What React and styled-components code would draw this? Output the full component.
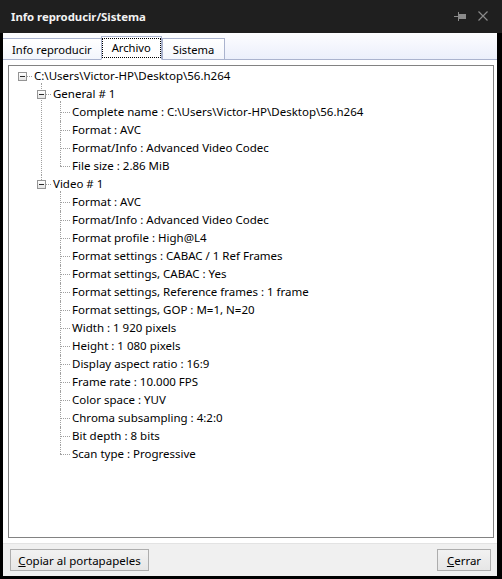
import styled, { createGlobalStyle } from "styled-components";

const GlobalStyle = createGlobalStyle`
  html, body {
    margin: 0;
    padding: 0;
    background: #000;
  }
  * {
    box-sizing: border-box;
  }
`;

const Window = styled.div`
  width: 502px;
  height: 579px;
  display: flex;
  flex-direction: column;
  background: #000;
  border-left: 3px solid #000;
  border-right: 5px solid #000;
  border-bottom: 3px solid #000;
  font-family: "Noto Sans", "Open Sans", sans-serif;
  font-size: 11.5px;
  color: #000;
`;

const TitleBar = styled.div`
  height: 33px;
  flex-shrink: 0;
  display: flex;
  align-items: center;
  justify-content: space-between;
  background: #1f1f1f;
  margin-left: -3px;
  margin-right: -5px;
  padding: 0 14px 1px 11px;
`;

const Title = styled.div`
  color: #f2f2f2;
  font-weight: 700;
  font-size: 11.4px;
  letter-spacing: -0.05px;
`;

const TitleIcons = styled.div`
  display: flex;
  align-items: center;
  gap: 12px;
  color: #8a8a8a;
`;

const TabStrip = styled.div`
  height: 27px;
  flex-shrink: 0;
  display: flex;
  align-items: flex-end;
  background: linear-gradient(#fdfdff, #ebeffb);
  border-bottom: 1px solid #aab3ce;
  font-size: 11.2px;
`;

const Tab = styled.div`
  height: ${(p) => (p.$active ? "24px" : "22px")};
  margin-bottom: -1px;
  padding: 0 ${(p) => p.$pad}px;
  display: flex;
  align-items: center;
  background: ${(p) => (p.$active ? "#fff" : "linear-gradient(#ffffff, #f3f5fc)")};
  border: 1px solid #aab3ce;
  border-bottom-color: ${(p) => (p.$active ? "#fff" : "#aab3ce")};
  border-left-width: ${(p) => (p.$first ? "0" : "1px")};
  margin-right: ${(p) => (p.$active ? "0" : "-1px")};
  position: relative;
  z-index: ${(p) => (p.$active ? 1 : 0)};
`;

const FocusLabel = styled.span`
  outline: 1px dotted #000;
  outline-offset: 1px;
  padding: 0 8px;
  margin: 0 -8px;
  line-height: 16px;
`;

const Panel = styled.div`
  flex: 1;
  background: #fff;
  padding: 5px 3px 5px 5px;
  display: flex;
`;

const TreeBox = styled.div`
  flex: 1;
  border: 1px solid #828282;
  background: #fff;
  padding: 1px 0 0 4px;
  overflow: hidden;
`;

const List = styled.ul`
  list-style: none;
  margin: 0;
  padding: 0 0 0 ${(p) => p.$indent}px;
`;

const Item = styled.li`
  position: relative;

  &::before {
    content: "";
    position: absolute;
    left: 9px;
    top: 0;
    bottom: 0;
    border-left: 1px dotted #a0a0a0;
  }

  &:first-child::before {
    top: -2px;
  }

  &:last-child::before {
    bottom: auto;
    height: 9px;
  }

  &:first-child:last-child::before {
    height: 11px;
  }
`;

const Row = styled.div`
  height: 18px;
  display: flex;
  align-items: center;
  white-space: nowrap;
`;

const Gutter = styled.span`
  width: 19px;
  height: 18px;
  flex-shrink: 0;
  position: relative;

  &::after {
    content: "";
    position: absolute;
    left: 9px;
    right: 0;
    top: 9px;
    border-top: 1px dotted #a0a0a0;
  }
`;

const Expander = styled.span`
  position: absolute;
  left: 5px;
  top: 5px;
  width: 9px;
  height: 9px;
  border: 1px solid #949494;
  background: linear-gradient(#ffffff, #e4e4e4);
  z-index: 1;

  &::after {
    content: "";
    position: absolute;
    left: 1px;
    right: 1px;
    top: 3px;
    height: 1px;
    background: #2a2a2a;
  }
`;

const Label = styled.span`
  padding-left: 2px;
  line-height: 18px;
`;

const BottomBar = styled.div`
  height: 33px;
  flex-shrink: 0;
  display: flex;
  align-items: center;
  justify-content: space-between;
  background: #f0f0f0;
  border-top: 1px solid #e3e3e3;
  padding: 0 6px 0 7px;
`;

const Button = styled.button`
  height: 22px;
  width: ${(p) => p.$width}px;
  font: inherit;
  color: #000;
  background: linear-gradient(#f2f2f2, #e6e6e6);
  border: 1px solid #adadad;
  border-radius: 0;
  padding: 0;
`;

const general = [
  "Complete name : C:\\Users\\Victor-HP\\Desktop\\56.h264",
  "Format : AVC",
  "Format/Info : Advanced Video Codec",
  "File size : 2.86 MiB",
];

const video = [
  "Format : AVC",
  "Format/Info : Advanced Video Codec",
  "Format profile : High@L4",
  "Format settings : CABAC / 1 Ref Frames",
  "Format settings, CABAC : Yes",
  "Format settings, Reference frames : 1 frame",
  "Format settings, GOP : M=1, N=20",
  "Width : 1 920 pixels",
  "Height : 1 080 pixels",
  "Display aspect ratio : 16:9",
  "Frame rate : 10.000 FPS",
  "Color space : YUV",
  "Chroma subsampling : 4:2:0",
  "Bit depth : 8 bits",
  "Scan type : Progressive",
];

const sections = [
  { name: "General # 1", fields: general },
  { name: "Video # 1", fields: video },
];

function PinIcon() {
  return (
    <svg width="12" height="9" viewBox="0 0 12 9">
      <rect x="0" y="4" width="4" height="1" fill="currentColor" />
      <rect x="4" y="0" width="1" height="9" fill="currentColor" />
      <rect x="5" y="2" width="7" height="5" fill="currentColor" />
    </svg>
  );
}

function CloseIcon() {
  return (
    <svg width="10" height="10" viewBox="0 0 10 10">
      <path d="M0.5 0.5 L9.5 9.5 M9.5 0.5 L0.5 9.5" stroke="currentColor" strokeWidth="1.2" />
    </svg>
  );
}

function Leaf({ text }) {
  return (
    <Item>
      <Row>
        <Gutter />
        <Label>{text}</Label>
      </Row>
    </Item>
  );
}

export default function App() {
  return (
    <>
      <GlobalStyle />
      <Window>
        <TitleBar>
          <Title>Info reproducir/Sistema</Title>
          <TitleIcons>
            <PinIcon />
            <CloseIcon />
          </TitleIcons>
        </TitleBar>

        <TabStrip>
          <Tab $first $pad={9}>Info reproducir</Tab>
          <Tab $active $pad={10}>
            <FocusLabel>Archivo</FocusLabel>
          </Tab>
          <Tab $pad={10}>Sistema</Tab>
        </TabStrip>

        <Panel>
          <TreeBox>
            <Row>
              <Gutter>
                <Expander />
              </Gutter>
              <Label>C:\Users\Victor-HP\Desktop\56.h264</Label>
            </Row>
            <List $indent={19}>
              {sections.map((s) => (
                <Item key={s.name}>
                  <Row>
                    <Gutter>
                      <Expander />
                    </Gutter>
                    <Label>{s.name}</Label>
                  </Row>
                  <List $indent={19}>
                    {s.fields.map((f) => (
                      <Leaf key={f} text={f} />
                    ))}
                  </List>
                </Item>
              ))}
            </List>
          </TreeBox>
        </Panel>

        <BottomBar>
          <Button $width={139}>
            <u>C</u>opiar al portapapeles
          </Button>
          <Button $width={54}>
            <u>C</u>errar
          </Button>
        </BottomBar>
      </Window>
    </>
  );
}
